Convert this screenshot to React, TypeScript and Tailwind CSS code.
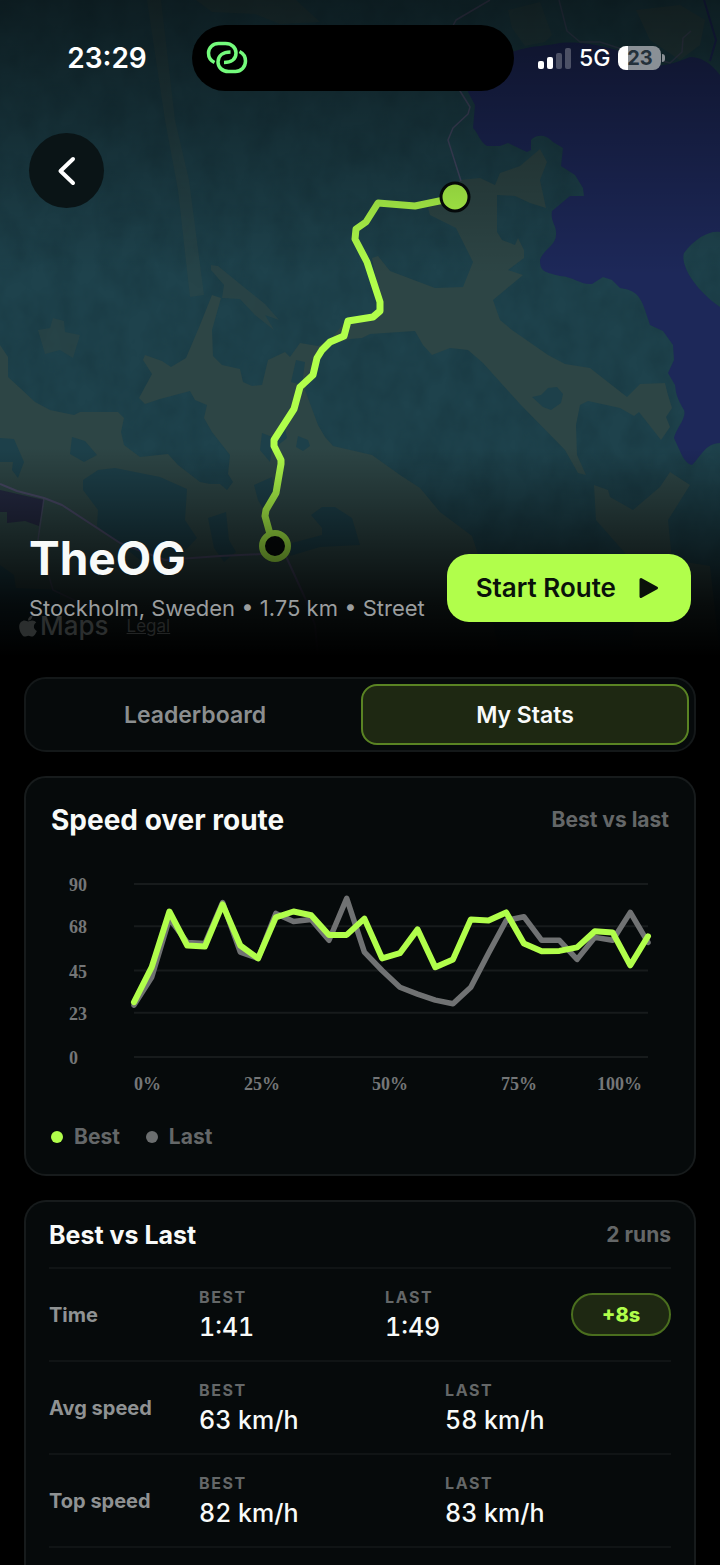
import { FaApple } from "react-icons/fa";

const BEST = [
  28.5, 46.7, 75.7, 58, 57.5, 79.4, 58, 51.3, 72.6, 75.7, 73.7, 63.5, 63.5, 72, 51.3,
  54, 66.4, 46.7, 50.8, 71.6, 71, 75.2, 59, 55, 55.2, 57, 65.4, 64.8, 47.7, 62.8,
];
const LAST = [
  27, 41.5, 72, 59.6, 59, 80.4, 54.5, 51.3, 74.7, 70.5, 71.6, 60.7, 82.5, 54.5, 45,
  36.3, 32.7, 29.6, 27.7, 36.3, 54, 71, 73, 60.7, 60.7, 50.8, 62.2, 60.7, 75.2, 59.6,
];

const PLOT = { left: 83, right: 597, top: 22, bottom: 195, max: 90 };

const toY = (speed: number) =>
  PLOT.bottom - (speed / PLOT.max) * (PLOT.bottom - PLOT.top);

const toPoints = (values: number[]) =>
  values
    .map((v, i) => {
      const x = PLOT.left + (i / (values.length - 1)) * (PLOT.right - PLOT.left);
      return `${x.toFixed(1)},${toY(v).toFixed(1)}`;
    })
    .join(" ");

const Y_TICKS = [90, 68, 45, 23, 0];
const X_TICKS = [
  { label: "0%", x: 83 },
  { label: "25%", x: 193 },
  { label: "50%", x: 321 },
  { label: "75%", x: 450 },
  { label: "100%", x: 546 },
];

const ROWS = [
  { label: "Time", best: "1:41", last: "1:49", delta: "+8s" },
  { label: "Avg speed", best: "63 km/h", last: "58 km/h" },
  { label: "Top speed", best: "82 km/h", last: "83 km/h" },
];

function RouteMap() {
  return (
    <svg
      className="absolute inset-0 h-full w-full"
      viewBox="0 0 720 656"
      preserveAspectRatio="xMidYMid slice"
      aria-hidden="true"
    >
      <defs>
        <linearGradient id="shadeTop" x1="0" y1="0" x2="0" y2="1">
          <stop offset="0" stopColor="#000" stopOpacity="0.56" />
          <stop offset="1" stopColor="#000" stopOpacity="0" />
        </linearGradient>
        <linearGradient id="shadeBottom" x1="0" y1="0" x2="0" y2="1">
          <stop offset="0" stopColor="#000" stopOpacity="0" />
          <stop offset="0.25" stopColor="#000" stopOpacity="0.26" />
          <stop offset="0.5" stopColor="#000" stopOpacity="0.55" />
          <stop offset="0.75" stopColor="#000" stopOpacity="0.83" />
          <stop offset="1" stopColor="#000" stopOpacity="1" />
        </linearGradient>
        <filter id="relief" x="0" y="0" width="1" height="1" colorInterpolationFilters="sRGB">
          <feTurbulence type="fractalNoise" baseFrequency="0.04 0.03" numOctaves="3" seed="4" />
          <feColorMatrix values="0 0 0 0 0.06  0 0 0 0 0.16  0 0 0 0 0.19  0.9 0 0 0 -0.28" />
        </filter>
      </defs>

      <rect width="720" height="656" fill="#1e424c" />
      <rect width="720" height="656" filter="url(#relief)" opacity="0.5" />

      <g fill="#2d4545">
        <path d="M0 345 8 357V377L20 388 35 402 50 410 74 415 80 412H118L124 418 121 432 124 445 140 457 168 454 178 465 200 482 210 484 220 484 227 490 233 482 228 474 230 455 212 432 204 418 207 405 195 400 190 391 160 399 145 404 139 398 152 374 143 360 145 355 162 361 171 367 186 358 200 325 208 305 212 295 221 298 212 330 213 356 222 365 240 369 243 382 252 386 262 385 268 360 285 352 290 357 300 343 318 346 330 340 345 322 378 316 380 300 372 258 378 256 390 271 435 288 463 287 473 262 462 240 456 228 430 215 428 208 445 200 460 180 480 178 495 185 500 173 520 166 540 149 547 162 540 180 546 208 530 203 515 196 497 195V232L502 240 515 245 518 238 524 250V258L508 270 523 275 505 290 493 300 500 320 512 330 548 355 565 364 590 368 627 397 640 384 665 383 668 395 672 408 666 417 670 427 661 440 639 412 634 416 620 408 588 401 580 405 576 425 577 455 586 475 578 473 565 450 520 404 483 363 468 350 450 348 432 355 423 345 415 331 370 334 362 338 350 339 330 345 315 360 305 390 318 425 325 437 333 446 372 455 400 475 420 488 440 512 472 536 480 560 500 656H0Z" />
        <path d="M147 0H161L175 120 189 180 204 295 190 297 178 190 165 120Z" opacity="0.5" />
        <path d="M211 265 218 266 245 288 265 304 279 320 265 315 274 330 255 315 240 299 222 298 224 285 211 270Z" opacity="0.7" />
        <path d="M38 330 50 328 53 318 64 321 65 332 80 335 73 358 60 350 45 354Z" opacity="0.6" />
        <path d="M594 485 608 490 610 497 633 510 660 487 670 472 690 485 668 520 672 560 710 566 720 656H630L640 580 625 553 596 520Z" />
        <path d="M196 0H296L320 22 280 24 255 14 212 12Z" opacity="0.6" />
        <path d="M508 10 540 2 552 35 545 42 525 46 512 28Z" opacity="0.5" />
        <path d="M636 10 680 5 705 20 700 45 680 60 650 40Z" opacity="0.7" />
      </g>

      <g fill="#1d404a">
        <path d="M72 437 85 441 97 455 84 462 70 454Z" />
        <path d="M0 438 14 439 24 462 18 478 12 470 13 462H0Z" />
        <path d="M83 480 98 470 115 468 160 477 187 489 185 520 197 538 180 556 140 560 97 526 98 510 83 490Z" />
        <path d="M262 433 275 438 285 428 287 438 272 450 270 462 260 450Z" />
        <path d="M298 436 308 440 310 446 303 451 296 447Z" />
        <path d="M254 485 272 477 275 495 265 512 258 500Z" />
        <path d="M311 515 322 507 335 507 352 518 360 545 320 547 290 556 292 543 322 535 322 528Z" />
        <path d="M208 518 226 512 229 540 236 552 224 562 214 548Z" />
        <path d="M532 397 541 395 548 388 557 387 563 394 561 403 551 410 543 407Z" />
        <path d="M0 565 14 575 16 588 60 590V656H0Z" />
        <path d="M296 360 305 362 302 385 291 382Z" />
      </g>

      <path
        fill="#1d2859"
        d="M465 60 500 60C515 45 545 47 560 43 590 40 620 52 630 53 650 72 668 66 690 57 700 57 710 62 720 75V232C710 230 695 238 684 253 680 265 695 290 720 307V443C705 443 700 458 692 465 684 463 682 455 674 438 676 428 687 418 684 410 675 395 676 390 675 385L668 373 674 360 673 345 663 331 650 325 645 310C640 295 635 290 620 288L612 280 603 277 592 284C580 285 575 277 560 276 545 272 540 272 540 260 543 250 556 245 556 235 557 225 550 222 552 211L570 196H584L583 188 575 175 561 166 563 148 553 142C545 133 535 135 531 140V150L527 152 508 143 500 146H487C480 142 478 133 473 128L475 105 468 92Z"
      />
      <path d="M0 490 44 500 39 526 25 521 7 523V512H0Z" fill="#252a43" />

      <g fill="none" stroke="#4a4a68" strokeWidth="2" strokeLinejoin="round">
        <path d="M0 484 17 491 44 498 62 505 120 543 165 560 220 556 262 554M284 552 305 598 315 625 318 656" />
        <path d="M44 498 38 540 50 580 53 590 95 610" strokeWidth="1.5" opacity="0.7" />
        <path d="M490 0 456 20 440 50 460 91 470 107 468 114 453 128 448 140 461 181" strokeWidth="1.5" opacity="0.85" />
        <path d="M559 0 567 31 580 42 600 42 640 55 670 63 682 52 683 38 691 31" strokeWidth="1.5" opacity="0.6" />
      </g>
      <path d="M704 0 716 40 710 61" fill="none" stroke="#1d2859" strokeWidth="2" />

      <path
        d="M444 200 415 206 378 203 366 222 356 229 355 239 367 262 380 302V311L373 317 348 321 344 336 330 342 322 350 317 358 313 375 300 387 294 409 274 440V446L281 460V464L276 493 266 510 265 516 270 534"
        fill="none"
        stroke="#b1fe4b"
        strokeWidth="7"
        strokeLinejoin="round"
      />
      <circle cx="455" cy="197" r="14" fill="#b1fe4b" stroke="#060a0b" strokeWidth="3" />
      <circle cx="275" cy="546" r="13" fill="#060a0b" stroke="#b1fe4b" strokeWidth="6" />

      <rect width="720" height="275" fill="url(#shadeTop)" />
      <rect y="448" width="720" height="208" fill="url(#shadeBottom)" />
    </svg>
  );
}

function LinkIcon() {
  return (
    <svg width="42" height="34" viewBox="0 0 42 34" fill="none" stroke="#74fb7c" strokeWidth="3.500" aria-hidden="true">
      <path d="M8.500 21.500C4.500 19.500 2.500 15.500 2.500 12 2.500 6.500 7 2.500 12.500 2.500H19.500C26 2.500 30 7 30 12 30 18.500 25 21.500 18 21.500" />
      <path d="M33.500 10.500C37.500 12.500 39.500 16.500 39.500 20 39.500 26 35 30.500 29.500 30.500H22.500C16 30.500 12 26 12 21 12 14.500 17 11 24.500 11" />
    </svg>
  );
}

function StatusBar() {
  return (
    <div className="relative grid grid-cols-[1fr_322px_1fr] items-center pt-[25px] pr-3.5">
      <time className="pl-[22px] text-center text-[28px] leading-9 font-semibold">23:29</time>
      <div className="flex h-[66px] items-center rounded-full bg-black pl-3.5">
        <LinkIcon />
      </div>
      <div className="flex items-center gap-2 pl-6">
        <div className="flex items-end gap-[3px]" role="img" aria-label="Signal: 2 of 4 bars">
          <span className="h-2 w-1.5 rounded-xs bg-white" />
          <span className="h-3 w-1.5 rounded-xs bg-white" />
          <span className="h-4 w-1.5 rounded-xs bg-white/25" />
          <span className="h-[21px] w-1.5 rounded-xs bg-white/25" />
        </div>
        <span className="text-[23px] leading-7 font-medium">5G</span>
        <div className="flex items-center gap-px">
          <div className="flex h-6 w-[43px] items-center justify-center overflow-hidden rounded-lg bg-linear-to-r from-white from-23% to-[#8a9096] to-23% text-[20px] leading-6 font-bold text-[#24313a]">
            23
          </div>
          <span className="h-2 w-[3px] rounded-r-full bg-[#8a9096]" />
        </div>
      </div>
    </div>
  );
}

function SpeedChart() {
  return (
    <svg viewBox="0 0 618 240" className="block h-auto w-full" role="img" aria-label="Speed over route, best and last run">
      {Y_TICKS.map((tick) => (
        <g key={tick}>
          <line x1={PLOT.left} x2={PLOT.right} y1={toY(tick)} y2={toY(tick)} stroke="#171b1c" strokeWidth="2" />
          <text x="18" y={toY(tick) + 7} className="fill-[#747677] font-['Liberation_Serif',serif] text-[18px] font-bold">
            {tick}
          </text>
        </g>
      ))}
      {X_TICKS.map((tick) => (
        <text key={tick.label} x={tick.x} y="228" className="fill-[#747677] font-['Liberation_Serif',serif] text-[18px] font-bold">
          {tick.label}
        </text>
      ))}
      <g fill="none" strokeWidth="5.500" strokeLinecap="round" strokeLinejoin="round">
        <polyline points={toPoints(LAST)} stroke="#707273" />
        <polyline points={toPoints(BEST)} stroke="#b1fe4b" strokeWidth="6" />
      </g>
    </svg>
  );
}

function Stat({ name, value }: { name: string; value: string }) {
  return (
    <td className="min-w-0 flex-1">
      <span className="block text-[16px] leading-5 font-bold tracking-widest text-[#646768] uppercase">{name}</span>
      <span className="mt-1 block text-[25px] leading-8 font-medium text-[#f8faf9] tabular-nums">{value}</span>
    </td>
  );
}

export default function App() {
  return (
    <div className="flex min-h-screen flex-col bg-black font-[Inter,'Liberation_Sans',sans-serif] text-white">
      <header className="relative flex min-h-[656px] flex-col overflow-hidden">
        <RouteMap />
        <div className="absolute bottom-3.5 left-[18px] flex items-center text-[#2b2e2e]">
          <FaApple className="h-6 w-5" aria-hidden="true" />
          <span className="pl-0.5 text-[26px] leading-8 font-medium">Maps</span>
          <a href="#legal" className="pl-[18px] text-[17px] leading-8 text-[#222424] underline">Legal</a>
        </div>
        <StatusBar />
        <div className="relative px-[29px] pt-[42px]">
          <button
            type="button"
            aria-label="Back"
            className="flex size-[75px] items-center justify-center rounded-full bg-[#0a1416]"
          >
            <svg width="20" height="30" viewBox="0 0 20 30" fill="none" stroke="#fff" strokeWidth="4" strokeLinecap="round" strokeLinejoin="round" aria-hidden="true">
              <path d="M16 3 3.500 15 16 27" />
            </svg>
          </button>
        </div>
        <div className="relative mt-auto flex items-end justify-between gap-4 px-[29px] pb-[34px]">
          <div>
            <h1 className="text-[46px] leading-[56px] font-bold text-[#f8faf9]">TheOG</h1>
            <p className="mt-2 text-[22px] leading-7 text-[#9a9d9e]">Stockholm, Sweden • 1.75 km • Street</p>
          </div>
          <button
            type="button"
            className="flex h-[68px] shrink-0 items-center gap-[22px] rounded-[22px] bg-[#b1fe4b] px-[29px] text-[26px] leading-8 font-semibold text-[#0a120a]"
          >
            Start Route
            <svg width="24" height="24" viewBox="0 0 24 24" aria-hidden="true">
              <path d="M3 3.500 18.500 12 3 20.500Z" fill="currentColor" stroke="currentColor" strokeWidth="3" strokeLinejoin="round" />
            </svg>
          </button>
        </div>
      </header>

      <main className="flex flex-1 flex-col gap-6 px-6 pt-[21px]">
        <div role="tablist" className="grid grid-cols-2 gap-0.5 rounded-[22px] border-2 border-[#141819] bg-[#060a0b] p-[5px] text-[23px] leading-7 font-semibold">
          <button type="button" role="tab" aria-selected="false" className="h-[61px] rounded-2xl text-[#8b8e8f]">
            Leaderboard
          </button>
          <button type="button" role="tab" aria-selected="true" className="h-[61px] rounded-2xl border-2 border-[#5a8423] bg-[#1e2812] text-[#f8faf9]">
            My Stats
          </button>
        </div>

        <section className="rounded-[22px] border-2 border-[#171b1c] bg-[#060a0b] px-[25px] pt-6 pb-[23px]">
          <div className="flex items-center justify-between">
            <h2 className="text-[28px] leading-9 font-bold text-[#f8faf9]">Speed over route</h2>
            <span className="text-[21px] leading-7 font-bold text-[#646768]">Best vs last</span>
          </div>
          <div className="mt-6">
            <SpeedChart />
          </div>
          <div className="mt-[21px] flex gap-[26px] text-[21px] leading-7 font-bold text-[#646768]">
            <span className="flex items-center gap-[11px]">
              <span className="size-3 rounded-full bg-[#b1fe4b]" />
              Best
            </span>
            <span className="flex items-center gap-[11px]">
              <span className="size-3 rounded-full bg-[#6b6e6f]" />
              Last
            </span>
          </div>
        </section>

        <section className="flex-1 rounded-t-[22px] border-2 border-b-0 border-[#171b1c] bg-[#060a0b] px-[23px]">
          <div className="flex h-[67px] items-center justify-between border-b-2 border-[#101415]">
            <h2 className="text-[25px] leading-8 font-bold text-[#f8faf9]">Best vs Last</h2>
            <span className="text-[21px] leading-7 font-bold text-[#646768]">2 runs</span>
          </div>
          <table className="block">
            <tbody className="block">
              {ROWS.map((row) => (
                <tr key={row.label} className="flex h-[93px] items-center gap-5 border-b-2 border-[#101415]">
                  <th scope="row" className="w-[130px] shrink-0 text-left text-[20px] leading-7 font-bold text-[#8f9293]">
                    {row.label}
                  </th>
                  <Stat name="Best" value={row.best} />
                  <Stat name="Last" value={row.last} />
                  {row.delta && (
                    <td className="flex h-[43px] w-[100px] items-center justify-center rounded-full border-2 border-[#4a6e1e] bg-[#1e2812] text-[20px] leading-7 font-extrabold text-[#b1fe4b]">
                      {row.delta}
                    </td>
                  )}
                </tr>
              ))}
            </tbody>
          </table>
        </section>
      </main>
    </div>
  );
}
